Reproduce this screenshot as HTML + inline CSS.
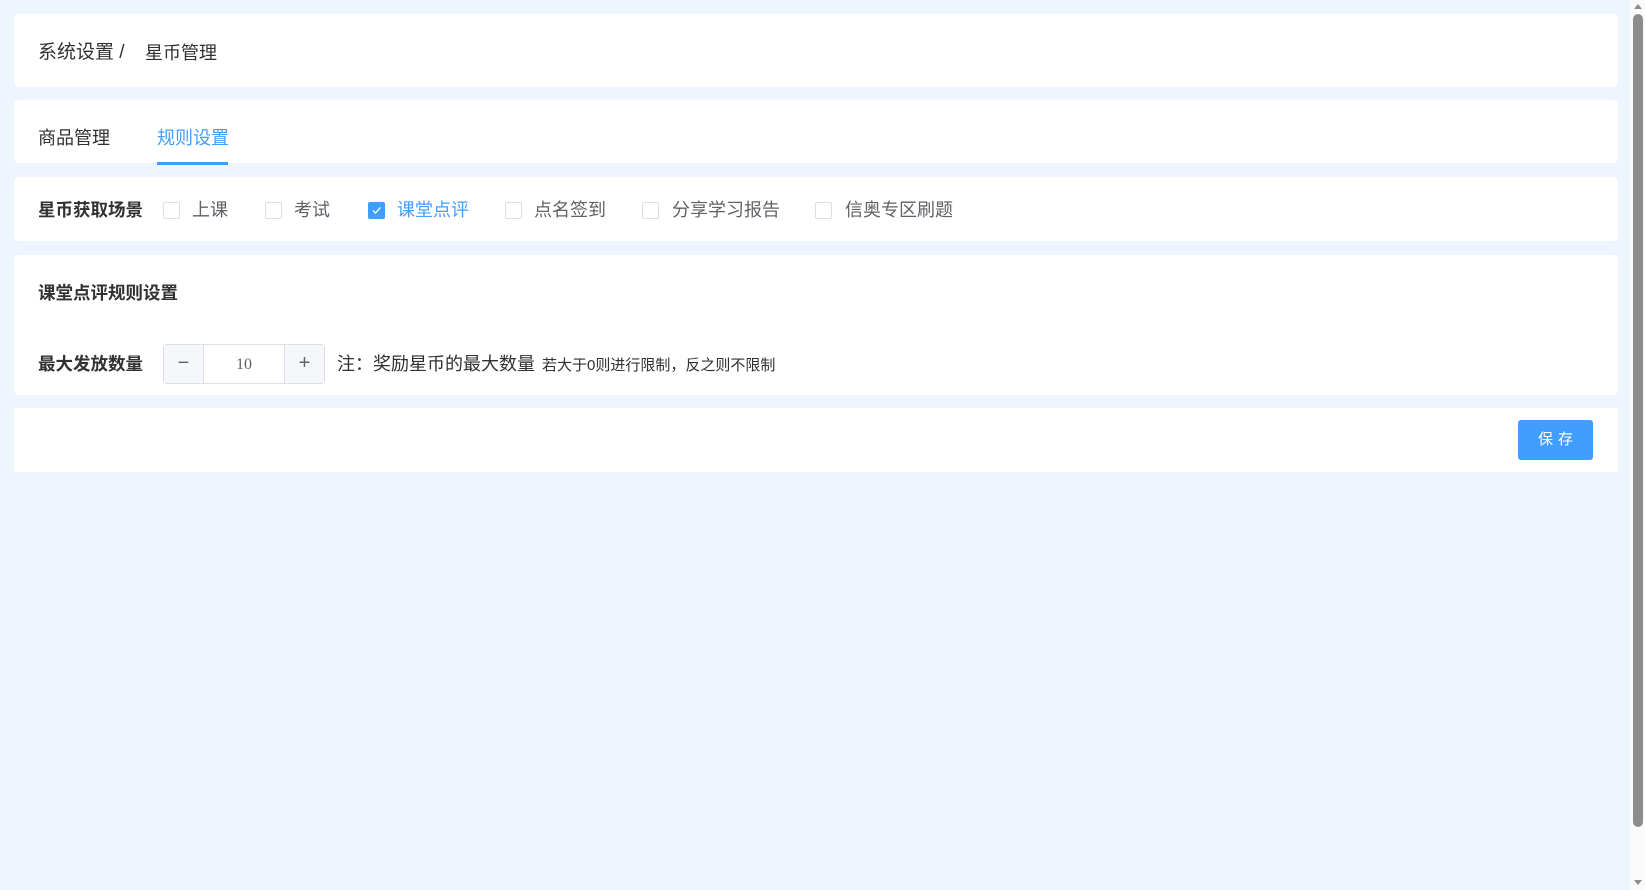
<!DOCTYPE html>
<html><head><meta charset="utf-8"><style>
*{margin:0;padding:0;box-sizing:border-box}
body{width:1645px;height:890px;background:#eef5fe;font-family:"Liberation Sans","Noto Sans CJK SC",sans-serif;position:relative;overflow:hidden;color:#333}
.card{position:absolute;left:14px;width:1604px;background:#fff;border-radius:5px}
.t{position:absolute;white-space:nowrap;line-height:1}
.cb{position:absolute;width:17px;height:17px;border:1px solid #dcdfe6;border-radius:2px;background:#fff}
.cb.on{background:#409eff;border-color:#409eff}
.lab{color:#606266;font-size:18px}
</style></head><body>
<div class="card" style="top:14px;height:73px">
  <div class="t" style="left:24px;top:29px;font-size:19px;color:#303133">系统设置 /</div>
  <div class="t" style="left:131px;top:30px;font-size:18px;color:#303133">星币管理</div>
</div>
<div class="card" style="top:100px;height:63px">
  <div class="t" style="left:24px;top:29px;font-size:18px;color:#303133">商品管理</div>
  <div class="t" style="left:143px;top:29px;font-size:18px;color:#409eff">规则设置</div>
  <div style="position:absolute;left:143px;top:62px;width:71px;height:3px;background:#409eff"></div>
</div>
<div class="card" style="top:177px;height:64px">
  <div class="t" style="left:24px;top:25px;font-size:17.5px;font-weight:bold;color:#303133">星币获取场景</div>
  <div class="cb" style="left:149px;top:25px"></div><div class="t lab" style="left:178px;top:24px">上课</div>
  <div class="cb" style="left:251px;top:25px"></div><div class="t lab" style="left:280px;top:24px">考试</div>
  <div class="cb on" style="left:354px;top:25px"><svg width="15" height="15" viewBox="0 0 15 15" style="position:absolute;left:0;top:0"><path d="M4 7.5l2.5 2.5 5-5.5" stroke="#fff" stroke-width="1.3" fill="none"/></svg></div><div class="t lab" style="left:383px;top:24px;color:#409eff">课堂点评</div>
  <div class="cb" style="left:491px;top:25px"></div><div class="t lab" style="left:520px;top:24px">点名签到</div>
  <div class="cb" style="left:628px;top:25px"></div><div class="t lab" style="left:658px;top:24px">分享学习报告</div>
  <div class="cb" style="left:801px;top:25px"></div><div class="t lab" style="left:831px;top:24px">信奥专区刷题</div>
</div>
<div class="card" style="top:255px;height:140px">
  <div class="t" style="left:24px;top:30px;font-size:17.5px;font-weight:bold;color:#303133">课堂点评规则设置</div>
  <div class="t" style="left:24px;top:101px;font-size:17.5px;font-weight:bold;color:#303133">最大发放数量</div>
  <div style="position:absolute;left:149px;top:89px;width:162px;height:40px;border:1px solid #dcdfe6;border-radius:4px;background:#fff">
    <div style="position:absolute;left:0;top:0;width:40px;height:38px;background:#f5f7fa;border-right:1px solid #dcdfe6;color:#606266;font-size:20px;text-align:center;line-height:36px">−</div>
    <div style="position:absolute;right:0;top:0;width:40px;height:38px;background:#f5f7fa;border-left:1px solid #dcdfe6;color:#606266;font-size:20px;text-align:center;line-height:36px">+</div>
    <div style="position:absolute;left:40px;right:40px;top:0;height:38px;text-align:center;line-height:40px;font-size:16px;color:#606266;font-family:'Liberation Serif',serif">10</div>
  </div>
  <div class="t" style="left:323px;top:100px;font-size:18px;color:#303133">注：奖励星币的最大数量</div>
  <div class="t" style="left:528px;top:103px;font-size:15px;color:#303133">若大于0则进行限制，反之则不限制</div>
</div>
<div class="card" style="top:408px;height:64px;border-radius:0">
  <div style="position:absolute;left:1504px;top:12px;width:75px;height:40px;background:#409eff;border-radius:3px;color:#fff;font-size:15px;text-align:center;line-height:40px;letter-spacing:5px;padding-left:5px">保存</div>
</div>
<div style="position:absolute;left:1630px;top:0;width:15px;height:890px;background:#fafafa"></div>
<div style="position:absolute;left:1633px;top:14px;width:10px;height:813px;background:#8c8c8c;border-radius:5px"></div>
<div style="position:absolute;left:1634px;top:4px;width:0;height:0;border-left:4px solid transparent;border-right:4px solid transparent;border-bottom:5px solid #8c8c8c"></div>
<div style="position:absolute;left:1634px;top:880px;width:0;height:0;border-left:4px solid transparent;border-right:4px solid transparent;border-top:5px solid #8c8c8c"></div>
</body></html>
